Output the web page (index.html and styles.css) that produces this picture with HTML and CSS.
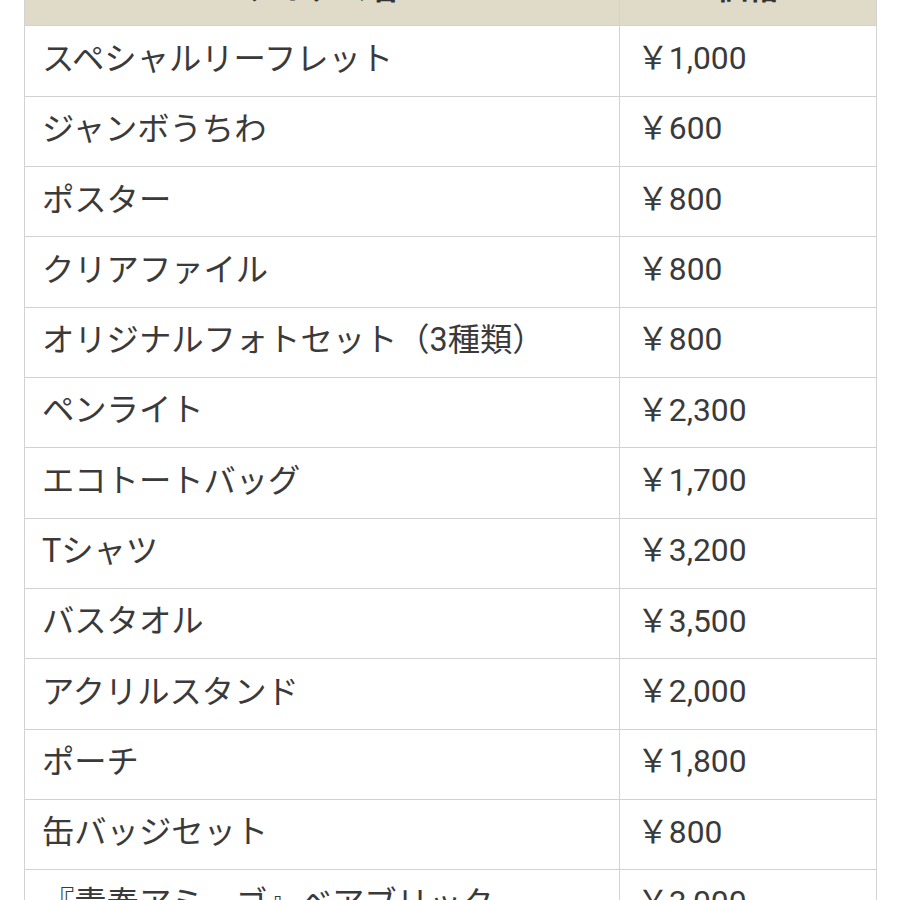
FILE: index.html
```html
<!DOCTYPE html>
<html lang="ja">
<head>
<meta charset="utf-8">
<link rel="stylesheet" href="styles.css">
</head>
<body>
<div class="table">
  <div class="cell head">アイテム名</div><div class="cell head">価格</div>
  <div class="cell name">スペシャルリーフレット</div><div class="cell price">￥1,000</div>
  <div class="cell name">ジャンボうちわ</div><div class="cell price">￥600</div>
  <div class="cell name">ポスター</div><div class="cell price">￥800</div>
  <div class="cell name">クリアファイル</div><div class="cell price">￥800</div>
  <div class="cell name">オリジナルフォトセット（3種類）</div><div class="cell price">￥800</div>
  <div class="cell name">ペンライト</div><div class="cell price">￥2,300</div>
  <div class="cell name">エコトートバッグ</div><div class="cell price">￥1,700</div>
  <div class="cell name">Tシャツ</div><div class="cell price">￥3,200</div>
  <div class="cell name">バスタオル</div><div class="cell price">￥3,500</div>
  <div class="cell name">アクリルスタンド</div><div class="cell price">￥2,000</div>
  <div class="cell name">ポーチ</div><div class="cell price">￥1,800</div>
  <div class="cell name">缶バッジセット</div><div class="cell price">￥800</div>
  <div class="cell name">『青春アミーゴ』ベアブリック</div><div class="cell price">￥3,000</div>
</div>
</body>
</html>
```
FILE: styles.css
```css
html, body {
  margin: 0;
  padding: 0;
  background: #ffffff;
  overflow: hidden;
}
body {
  font-family: Roboto, "Noto Sans CJK JP", sans-serif;
  color: #3a3a3a;
}
.table {
  display: grid;
  grid-template-columns: 595px 257px;
  grid-auto-rows: 70.33px;
  width: 853px;
  margin: -45px 0 0 24px;
  border-left: 1px solid #d2d2d2;
  border-top: 1px solid #d2d2d2;
}
.cell {
  box-sizing: border-box;
  border-right: 1px solid #d2d2d2;
  border-bottom: 1px solid #d2d2d2;
  display: flex;
  align-items: center;
  padding-left: 17px;
  padding-bottom: 4px;
  line-height: 1;
  white-space: nowrap;
}
.name {
  font-size: 32.3px;
}
.price {
  font-size: 31.8px;
}
.head {
  background: #e0dbc9;
  justify-content: center;
  padding-left: 0;
  font-size: 31px;
  font-weight: bold;
  color: #333333;
}
```
